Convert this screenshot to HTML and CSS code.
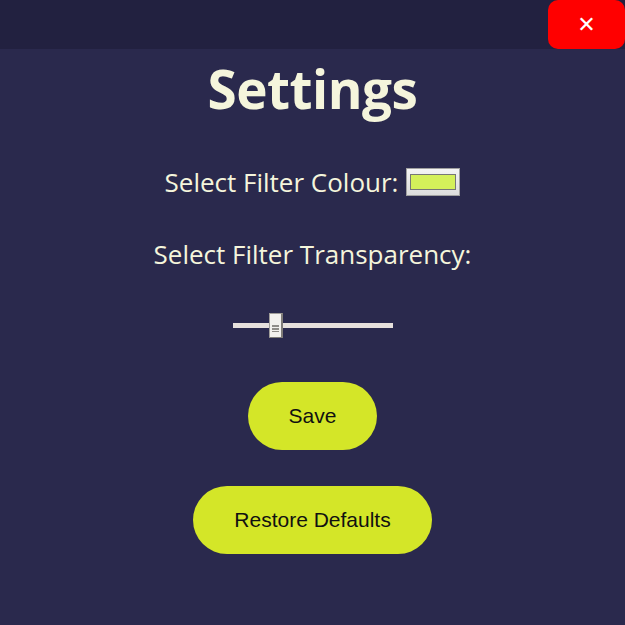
FILE: index.html
```html
<!DOCTYPE html>
<html>
<head>
<meta charset="utf-8">
<link rel="stylesheet" href="styles.css">
</head>
<body>
<div class="topbar">
  <button class="close">✕</button>
</div>
<main class="panel">
  <h1 class="title">Settings</h1>
  <div class="row colour-row">
    <label class="label" for="colour">Select Filter Colour:</label>
    <input class="swatch" id="colour" type="color" value="#d4f05a">
  </div>
  <div class="row">
    <label class="label" for="alpha">Select Filter Transparency:</label>
  </div>
  <input class="slider" id="alpha" type="range" min="0" max="100" value="25">
  <button class="pill save">Save</button>
  <button class="pill restore">Restore Defaults</button>
</main>
</body>
</html>
```
FILE: styles.css
```css
html, body {
  margin: 0;
  padding: 0;
  height: 100%;
  background: #2a294d;
}
body {
  font-family: "Open Sans", "Noto Sans", sans-serif;
  color: #f5f5dc;
}
.topbar {
  height: 49px;
  background: #222140;
  display: flex;
  justify-content: flex-end;
}
.close {
  width: 77px;
  height: 49px;
  border: none;
  background: #ff0000;
  color: #ffffff;
  border-radius: 10px;
  font-family: "DejaVu Sans", sans-serif;
  font-weight: bold;
  font-size: 22px;
  padding: 0;
}
.panel {
  display: flex;
  flex-direction: column;
  align-items: center;
}
.title {
  margin: 5px 0 0 0;
  font-size: 53px;
  font-weight: 700;
  line-height: 70px;
  letter-spacing: -0.5px;
}
.row {
  display: flex;
  align-items: center;
  gap: 8px;
}
.colour-row {
  margin-top: 40px;
}
.row + .row {
  margin-top: 36px;
}
.label {
  font-size: 26px;
  line-height: 36px;
}
.swatch {
  width: 54px;
  height: 28px;
  padding: 5px 3px;
  border: 1px solid #a0a0a0;
  border-radius: 0;
  background: linear-gradient(#f4f4f4, #dcdcdc);
  box-sizing: border-box;
}
.swatch::-webkit-color-swatch-wrapper {
  padding: 0;
}
.swatch::-webkit-color-swatch {
  border: 1px solid #777777;
}
.slider {
  -webkit-appearance: none;
  appearance: none;
  width: 160px;
  height: 25px;
  margin: 41px 0 0 0;
  background: transparent;
}
.slider::-webkit-slider-runnable-track {
  height: 5px;
  background: #e6e0dc;
}
.slider::-webkit-slider-thumb {
  -webkit-appearance: none;
  width: 14px;
  height: 25px;
  margin-top: -10px;
  box-sizing: border-box;
  border: 1px solid #a09d99;
  border-right: 2px solid #7f7c78;
  border-bottom-color: #7f7c78;
  background:
    linear-gradient(#8f8c88, #8f8c88) 2px 11px / 7px 2px no-repeat,
    linear-gradient(#8f8c88, #8f8c88) 2px 14px / 7px 2px no-repeat,
    linear-gradient(#8f8c88, #8f8c88) 2px 17px / 7px 1px no-repeat,
    #f2f0ed;
}
.pill {
  border: none;
  background: #d4e628;
  color: #111111;
  font-family: "Liberation Sans", Arial, sans-serif;
  font-size: 21px;
  height: 68px;
  border-radius: 34px;
  padding: 0;
}
.save {
  width: 129px;
  margin-top: 44px;
}
.restore {
  width: 239px;
  margin-top: 36px;
}
```
